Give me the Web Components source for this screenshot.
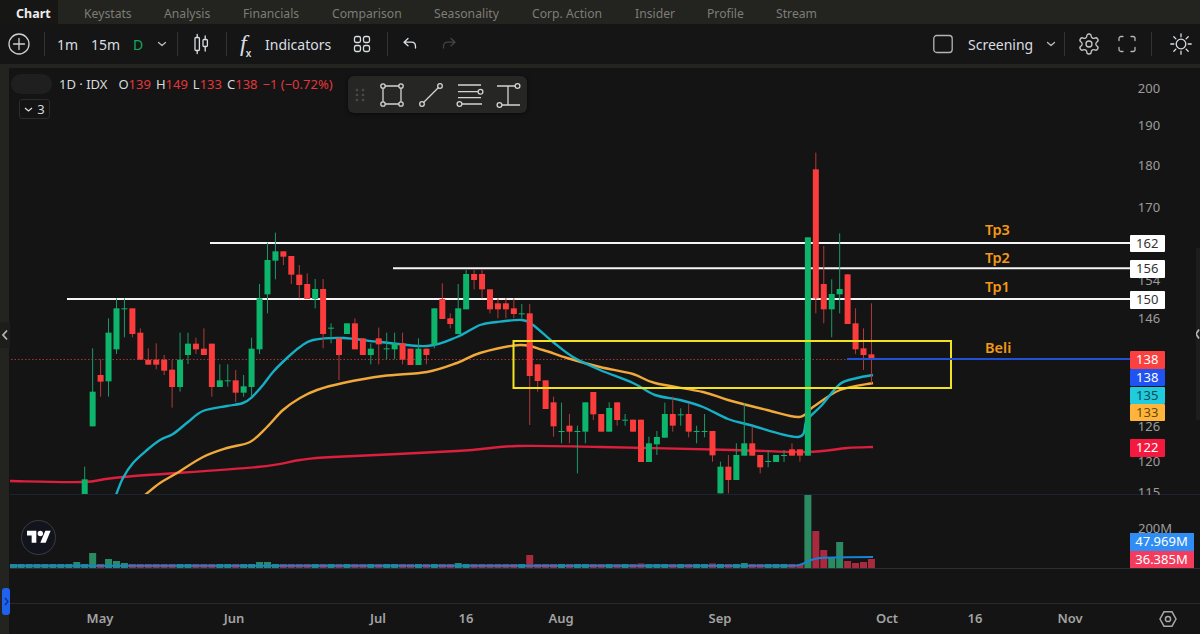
<!DOCTYPE html>
<html><head><meta charset="utf-8"><title>Chart</title>
<style>html,body{margin:0;padding:0;background:#141414;overflow:hidden}body{font-family:"Noto Sans",sans-serif}</style>
</head><body>
<tv-app></tv-app>
<template id="toolbar-tpl">
<style>
:host{display:flex;align-items:center;height:40px;box-sizing:border-box;padding:0 7px;background:#151515;color:#d9dee2;font:14px "Noto Sans",sans-serif}
svg{display:block;flex:none;fill:none;stroke:currentColor;stroke-width:1.300;stroke-linecap:round;stroke-linejoin:round}
.s{flex:none;width:1px;height:24px;background:#333331}
.t{flex:none;white-space:nowrap}
.fx{flex:none;width:26px;font:italic 24px "Liberation Serif",serif;line-height:28px;color:#d9dee2}
.fx sub{font:700 10px "Liberation Sans",sans-serif;margin-left:-1px}
.g{margin-left:auto}
.d{color:#11a95b}
.c{color:#bbb}
</style>
<svg style="color:#cfcfcf" width="24" height="24" viewBox="0 0 24 24"><circle cx="12" cy="12" r="10"/><path d="M12 6.500v11M6.500 12h11"/></svg>
<i class="s" style="margin-left:13px"></i>
<span class="t" style="margin-left:12px;width:22px">1m</span>
<span class="t" style="margin-left:12px;width:30px">15m</span>
<span class="t d" style="margin-left:12px;width:10px">D</span>
<svg class="c" style="margin-left:13px" width="12" height="12" viewBox="0 0 12 12"><path d="M2.500 4.500 6 7.500l3.500-3"/></svg>
<i class="s" style="margin-left:9px"></i>
<svg style="margin-left:15px" width="16" height="24" viewBox="0 0 16 24"><rect x="2" y="5.500" width="4.400" height="13" rx="1"/><path d="M4.200 2.500v3M4.200 18.500v3"/><rect x="10" y="7.500" width="4.400" height="7" rx="1"/><path d="M12.200 4v3.500M12.200 14.500V19"/></svg>
<i class="s" style="margin-left:17px"></i>
<span class="fx" style="margin-left:13px">f<sub>x</sub></span>
<span class="t" style="width:67px;margin-left:-1px">Indicators</span>
<svg style="margin-left:21px" width="18" height="18" viewBox="0 0 18 18"><rect x="1.500" y="1.500" width="6" height="6" rx="1.800"/><rect x="10.500" y="1.500" width="6" height="6" rx="1.800"/><rect x="1.500" y="10.500" width="6" height="6" rx="1.800"/><rect x="10.500" y="10.500" width="6" height="6" rx="1.800"/></svg>
<i class="s" style="margin-left:16px"></i>
<svg style="margin-left:13px" width="18" height="18" viewBox="0 0 18 18"><path d="M7 3.500 3 7.200l4 3.500M3 7.200h7.500c2.500 0 4 1.700 4 4.300V13"/></svg>
<svg style="margin-left:21px;color:#444" width="18" height="18" viewBox="0 0 18 18"><path d="M11 3.500l4 3.700-4 3.500M15 7.200H7.500c-2.500 0-4 1.700-4 4.300V13"/></svg>
<svg class="g" width="20" height="20" viewBox="0 0 20 20" style="color:#b5b5b5"><rect x="0.800" y="1.500" width="18.400" height="17" rx="3"/></svg>
<span class="t" style="margin-left:15px;width:67px">Screening</span>
<svg class="c" style="margin-left:10px" width="12" height="12" viewBox="0 0 12 12"><path d="M2.500 4.500 6 7.500l3.500-3"/></svg>
<i class="s" style="margin-left:7px"></i>
<svg style="margin-left:12px;color:#c8c8c8" width="24" height="24" viewBox="0 0 24 24"><path d="M12.220 2h-.44a2 2 0 0 0-2 2v.18a2 2 0 0 1-1 1.730l-.43.25a2 2 0 0 1-2 0l-.15-.08a2 2 0 0 0-2.730.73l-.22.38a2 2 0 0 0 .73 2.730l.15.1a2 2 0 0 1 1 1.720v.51a2 2 0 0 1-1 1.740l-.15.09a2 2 0 0 0-.73 2.730l.22.38a2 2 0 0 0 2.730.73l.15-.08a2 2 0 0 1 2 0l.43.25a2 2 0 0 1 1 1.730V20a2 2 0 0 0 2 2h.44a2 2 0 0 0 2-2v-.18a2 2 0 0 1 1-1.730l.43-.25a2 2 0 0 1 2 0l.15.08a2 2 0 0 0 2.730-.73l.22-.39a2 2 0 0 0-.73-2.730l-.15-.08a2 2 0 0 1-1-1.740v-.5a2 2 0 0 1 1-1.740l.15-.09a2 2 0 0 0 .73-2.730l-.22-.38a2 2 0 0 0-2.730-.73l-.15.08a2 2 0 0 1-2 0l-.43-.25a2 2 0 0 1-1-1.730V4a2 2 0 0 0-2-2z"/><circle cx="12" cy="12" r="3"/></svg>
<svg style="margin-left:16px;color:#b5b5b5" width="20" height="20" viewBox="0 0 20 20"><path d="M2 6.500V4.500a2 2 0 0 1 2-2h2M14 2.500h2a2 2 0 0 1 2 2v2M18 13.500v2a2 2 0 0 1-2 2h-2M6 17.500H4a2 2 0 0 1-2-2v-2"/></svg>
<i class="s" style="margin-left:14px"></i>
<svg style="margin-left:17px" width="24" height="24" viewBox="0 0 24 24"><circle cx="12" cy="12" r="4.800"/><path d="M12 1.800v3M12 19.200v3M1.800 12h3M19.200 12h3M4.800 4.800l2.100 2.100M17.100 17.100l2.100 2.100M4.800 19.200l2.100-2.100M17.100 6.900l2.100-2.100"/></svg>
</template>
<template id="draw-tpl">
<style>
:host{position:absolute;left:338px;top:8px;width:179px;height:37px;box-sizing:border-box;display:flex;align-items:center;padding-left:6px;background:#262624;border-radius:6px;box-shadow:0 1px 4px #0008;color:#d4d4d4}
svg{display:block;flex:none;fill:none;stroke:currentColor;stroke-width:1.300}
svg circle{fill:#262624}
.gr{stroke:none;width:12px;height:14px}
.gr circle{fill:#4a4a48}
</style>
<svg class="gr" viewBox="0 0 12 14"><circle cx="3" cy="2" r="1.300"/><circle cx="9" cy="2" r="1.300"/><circle cx="3" cy="7" r="1.300"/><circle cx="9" cy="7" r="1.300"/><circle cx="3" cy="12" r="1.300"/><circle cx="9" cy="12" r="1.300"/></svg>
<svg style="margin-left:12px" width="28" height="28" viewBox="-14 -14 28 28"><path d="M-9-9H9V9H-9Z"/><circle cx="-9" cy="-9" r="2.200"/><circle cx="9" cy="-9" r="2.200"/><circle cx="-9" cy="9" r="2.200"/><circle cx="9" cy="9" r="2.200"/></svg>
<svg style="margin-left:11px" width="28" height="28" viewBox="-14 -14 28 28"><path d="M-9 9 9-9"/><circle cx="-9" cy="9" r="2.300"/><circle cx="9" cy="-9" r="2.300"/></svg>
<svg style="margin-left:11px" width="28" height="28" viewBox="-14 -14 28 28"><path d="M-12-10H11M-12-3.300H8M-12 2.700H11M-8 9H12"/><circle cx="10.500" cy="-3.300" r="2.400"/><circle cx="-10.500" cy="9" r="2.400"/></svg>
<svg style="margin-left:10px" width="28" height="28" viewBox="-14 -14 28 28"><path d="M-11-9H8M0-9V10M-6 10H12"/><circle cx="9.500" cy="-9" r="2.400"/><circle cx="-8.500" cy="10" r="2.400"/></svg>
</template>
<script>
class TvBase extends HTMLElement{
  constructor(){super();this.attachShadow({mode:'open'});this.shadowRoot.innerHTML=this.markup()}
  markup(){return '<slot></slot>'}
}
class TvTabs extends TvBase{
  markup(){return `<style>:host{display:flex;height:24px;background:#23231f;font:12.200px "Noto Sans",sans-serif;color:#7d7d78;line-height:27px;overflow:hidden}
  b{display:block;width:58px;background:#161614;color:#ececec;font-weight:700;font-size:12.500px;padding-left:16px;box-sizing:border-box;flex:none;margin-right:26px}
  span{display:block;flex:none;white-space:nowrap}</style>
  <b>Chart</b><span style="width:80px">Keystats</span><span style="width:79px">Analysis</span><span style="width:89px">Financials</span><span style="width:102px">Comparison</span><span style="width:98px">Seasonality</span><span style="width:103px">Corp. Action</span><span style="width:72px">Insider</span><span style="width:69px">Profile</span><span>Stream</span>`}
}
class TvToolbar extends HTMLElement{constructor(){super();this.attachShadow({mode:'open'}).appendChild(document.getElementById('toolbar-tpl').content.cloneNode(true))}}
class TvDrawBar extends HTMLElement{constructor(){super();this.attachShadow({mode:'open'}).appendChild(document.getElementById('draw-tpl').content.cloneNode(true))}}
class AxisLabel extends TvBase{
  markup(){return `<style>:host{position:absolute;left:1120.500px;width:37px;height:18px;margin-top:-9px;text-align:center;color:#9c9c9c;font:13px/18px "Noto Sans",sans-serif}</style><slot></slot>`}
  connectedCallback(){this.style.top=(+this.getAttribute('y')-68)+'px'}
}
class PriceTag extends TvBase{
  markup(){return `<style>:host{position:absolute;left:1119.500px;width:35.500px;height:17.500px;text-align:center;font:13px/17px "Noto Sans",sans-serif;border-radius:1px}</style><slot></slot>`}
  connectedCallback(){this.style.top=(+this.getAttribute('y')-68)+'px';this.style.background=this.getAttribute('bg');this.style.color=this.getAttribute('fg')||'#fff'}
}
class ChartNote extends TvBase{
  markup(){return `<style>:host{position:absolute;left:975px;color:#f39a16;font:600 14.500px/18px "Noto Sans",sans-serif;height:18px}</style><slot></slot>`}
  connectedCallback(){this.style.top=(+this.getAttribute('y')-77)+'px'}
}
class TvLegend extends TvBase{
  markup(){return `<style>:host{position:absolute;left:1px;top:6px;display:block;font:13px/20px "Noto Sans",sans-serif;color:#d8dadc}
  .r{display:flex;align-items:center;white-space:nowrap}
  .blob{width:41px;height:20px;border-radius:10px;background:#1f1f1f;margin-right:7px}
  em{font-style:normal;color:#e2373d;margin-right:5px}
  .v{margin:5px 0 0 8px;width:31px;height:20px;box-sizing:border-box;border:1px solid #2b2b2b;border-radius:3px;display:flex;align-items:center;justify-content:center;gap:4px;font-size:13px;line-height:18px}
  svg{fill:none;stroke:#d8dadc;stroke-width:1.300}</style>
  <div class="r"><i class="blob"></i><span style="margin-right:11px">1D · IDX</span><span>O</span><em>139</em><span>H</span><em>149</em><span>L</span><em>133</em><span>C</span><em>138</em><em style="margin:0">−1 (−0.72%)</em></div>
  <div class="v"><svg width="9" height="9" viewBox="0 0 9 9"><path d="M1 3l3.500 3L8 3"/></svg>3</div>`}
}
const G=1,R=0;
/* type, bodyTop, bodyBottom, wickTop, wickBottom; units are 3x px from y=230 */
const CANDLES=[[G,748,795,710,795],[G,485,589,355,589],[R,435,455,388,500],[G,308,454,265,500],[G,235,358,205,372],[G,235,238,205,322],[R,235,312,235,322],[R,308,389,295,389],[R,389,404,355,404],[R,389,404,340,418],[R,389,422,375,435],[R,419,471,389,533],[G,389,471,308,485],[G,341,375,308,402],[R,341,358,323,372],[R,356,375,295,375],[R,341,471,341,500],[G,451,471,403,471],[G,451,454,403,470],[R,451,488,420,516],[G,469,488,435,500],[G,356,471,323,500],[G,205,358,162,372],[G,90,193,38,250],[G,64,92,8,148],[R,64,80,64,105],[R,78,134,78,162],[R,134,165,105,205],[R,162,207,130,207],[G,177,207,147,235],[R,177,312,147,355],[G,293,296,280,340],[R,325,375,325,450],[G,280,312,280,312],[R,280,358,265,358],[R,325,375,325,375],[G,356,375,340,403],[R,325,343,293,403],[G,355,358,308,388],[G,340,358,308,388],[R,340,389,308,403],[R,356,405,356,405],[G,356,405,325,405],[R,356,375,356,403],[G,235,343,235,355],[R,207,267,160,267],[R,265,282,250,295],[G,235,312,162,312],[G,132,238,120,238],[R,132,150,120,178],[R,132,178,120,205],[R,178,238,178,250],[R,220,238,205,265],[R,220,238,205,265],[R,235,252,205,265],[G,250,253,222,265],[R,250,438,222,585],[R,403,453,403,485],[R,451,537,451,537],[R,517,589,500,620],[G,603,606,518,640],[R,587,605,552,640],[G,603,606,587,730],[G,517,605,517,640],[R,486,553,486,570],[R,552,605,552,605],[G,534,605,517,605],[R,517,570,517,587],[G,569,572,552,587],[R,569,605,569,605],[R,569,696,569,696],[G,640,696,620,696],[G,621,643,603,675],[G,552,623,518,623],[R,552,587,500,605],[G,553,556,535,587],[R,552,605,520,622],[G,603,606,587,640],[G,603,606,552,622],[R,603,676,603,695],[G,710,790,695,790],[R,710,750,675,790],[G,675,750,640,750],[G,640,677,520,677],[R,640,677,590,677],[R,675,712,675,730],[G,693,696,660,712],[G,675,696,675,696],[G,675,678,660,696],[R,658,677,640,677],[R,658,677,658,695],[G,22,677,22,677],[R,-182,205,-232,250],[R,162,238,48,280],[G,192,238,148,322],[G,177,193,10,250],[R,133,282,133,282],[R,280,358,235,372],[R,355,375,295,420],[R,373,390,220,460]];
const XAT=i=>84.700+i*7.947;
const smooth=p=>{let d=`M${p[0][0]} ${p[0][1]}`;for(let i=0;i<p.length-1;i++){const a=p[Math.max(i-1,0)],b=p[i],c=p[i+1],e=p[Math.min(i+2,p.length-1)];d+=`C${b[0]+(c[0]-a[0])/6} ${b[1]+(c[1]-a[1])/6} ${c[0]-(e[0]-b[0])/6} ${c[1]-(e[1]-b[1])/6} ${c[0]} ${c[1]}`}return d};
const TEAL=[[116,495],[123,478],[133,463],[147,450],[160,440],[173,434],[188,422],[203,411],[227,406],[243,403],[252,397],[263,385],[273,372],[287,358],[300,347],[313,340],[343,338],[380,342],[427,346],[457,337],[480,325],[497,322],[522,320],[533,325],[553,342],[573,357],[600,370],[633,383],[655,395],[680,400],[703,407],[728,419],[750,425],[798,437],[807,420],[822,405],[840,384],[857,378],[873,375]];
const ORANGE=[[145,495],[160,483],[177,473],[203,457],[227,448],[250,442],[267,427],[283,410],[300,398],[317,390],[343,383],[383,376],[427,372],[457,363],[480,353],[520,345],[543,350],[567,358],[600,367],[633,374],[655,383],[703,392],[728,400],[767,410],[799,417],[813,407],[840,390],[873,383]];
const CRIM=[[10,481],[83,482],[123,477],[257,467],[300,460],[333,457],[457,451],[517,446],[600,447],[733,450],[807,452],[847,448],[873,447]];
class PricePane extends TvBase{
  markup(){
    let c='';
    CANDLES.forEach((d,i)=>{const x=XAT(i),col=d[0]?'#0db56c':'#fb3c3c',wc=d[0]?'#1b9a68':'#b23a3a';
      const y=v=>230+v/3;
      c+=`<path d="M${x} ${y(d[3])}V${Math.min(y(d[4]),494)}" stroke="${wc}" stroke-width="1"/>`;
      const top=y(d[1]),bot=Math.min(y(d[2]),494);
      c+=`<rect x="${x-3}" y="${top}" width="6" height="${Math.max(bot-top,1)}" fill="${col}"/>`});
    const line=(x,y)=>`<path d="M${x} ${y}H1130" stroke="#f5f5f5" stroke-width="2"/>`;
    return `<style>:host{display:block;position:relative;height:427px;background:#141414;overflow:hidden}
    svg{display:block;position:absolute;left:0;top:0}</style>
    <svg width="1190" height="427" viewBox="10 68 1190 427" fill="none">
      <path d="M11 359.500H1130" stroke="#a83232" stroke-width="1" stroke-dasharray="1.500 2"/>
      ${line(210,243)}${line(393,268.300)}${line(67,299)}
      <path d="${smooth(CRIM)}" stroke="#dd1f3e" stroke-width="2.400"/>
      <path d="${smooth(ORANGE)}" stroke="#f0a93a" stroke-width="2.400"/>
      <path d="${smooth(TEAL)}" stroke="#16b0c6" stroke-width="2.400"/>
      ${c}
      <rect x="513.500" y="341" width="437.500" height="47" stroke="#f2e21f" stroke-width="2"/>
      <path d="M847 359H1130" stroke="#2350d8" stroke-width="2"/>
      <path d="M10 494.500H1200" stroke="#1d2330" stroke-width="1"/>
    </svg><slot></slot>`}
}
class VolumePane extends TvBase{
  markup(){
    const tall={'-1':562,1:553,3:559,4:561,5:563,22:562,23:562,24:564,47:563,56:555,'91':495,92:531,93:550,94:558,95:542,96:561,97:563,98:562,99:559,79:563.500,83:563,90:564,70:563.500};
    let b='';
    for(let i=-9;i<100;i++){const x=XAT(i);
      const col=i>=0?(CANDLES[i][0]?'#2b8a61':'#a82a3f'):'#2b8a61';
      const t=tall[i]||564;
      const e=Math.min(568,568);
      b+=`<rect x="${Math.max(x-3.500,10)}" y="${t}" width="7" height="${e-t}" fill="${col}"/>`}
    return `<style>:host{display:block;position:relative;height:108px;background:#141414;overflow:hidden}
    svg{display:block;position:absolute;left:0;top:0}
    .r{position:absolute;left:1128px;top:24px;color:#9c9c9c;font:13px/18px "Noto Sans",sans-serif}
    .tg{position:absolute;left:1119.500px;width:64px;height:17.500px;text-align:center;color:#fff;font:13px/17px "Noto Sans",sans-serif}</style>
    <svg width="1190" height="108" viewBox="10 495 1190 108" fill="none">
      <path d="M10 568.500H1200" stroke="#2b2e33"/>
      ${b}
      <path d="M10 565.800H795C803 565.800 808 559 820 558S850 557 873 557" stroke="#1782d8" stroke-width="2"/>
    </svg>
    <span class="r">200M</span>
    <span class="tg" style="top:38px;background:#2f8df4">47.969M</span>
    <span class="tg" style="top:55.500px;background:#f33c5d">36.385M</span>
    <tv-mark></tv-mark>`}
}
class TvMark extends TvBase{
  markup(){return `<style>:host{position:absolute;left:11px;top:25px;width:35px;height:35px;box-sizing:border-box;border-radius:50%;border:1.500px solid #3c3c40;background:#11141c;display:flex;align-items:center;justify-content:center}
  svg{display:block}</style><svg width="24" height="19" viewBox="0 0 36 28" fill="#fff"><path d="M14 22H7V11H0V4h14v18zM28 22h-8l7.500-18h8L28 22z"/><circle cx="20" cy="8" r="4"/></svg>`}
}
class TimeAxis extends TvBase{
  markup(){const pts=[['May',100],['Jun',234],['Jul',378],['16',466],['Aug',561],['Sep',720],['Oct',887],['16',975],['Nov',1070]];
    return `<style>:host{display:block;position:relative;height:31px;box-sizing:border-box;border-top:1px solid #2a2a2a;background:#141414;color:#a3a3a3;font:600 13px/28px "Noto Sans",sans-serif}
    span{position:absolute;top:0;transform:translateX(-50%)}
    svg{position:absolute;left:1148px;top:5px;fill:none;stroke:#a8a8a8;stroke-width:1.500}</style>
    ${pts.map(p=>`<span style="left:${p[1]-10}px">${p[0]}</span>`).join('')}
    <svg width="20" height="20" viewBox="0 0 20 20"><path d="M6 2.800h8l4 7.200-4 7.200H6L2 10z"/><circle cx="10" cy="10" r="2.600"/></svg>`}
}
class TvApp extends TvBase{
  markup(){return `<style>:host{display:flex;flex-direction:column;width:1200px;height:634px;overflow:hidden;position:relative;background:#141414}
  .gap{height:4px;background:#23231f;flex:none}
  .work{display:flex;flex:1;min-height:0}
  .rail{flex:none;width:10px;background:#141414;display:flex;flex-direction:column;align-items:flex-start}
  .strip{width:9px;flex:1;background:#23231f;position:relative}
  .col{flex:1;min-width:0;display:flex;flex-direction:column}
  .ch{position:absolute;left:0;top:254px;width:10px;height:26px;background:#1d1d1b;display:flex;align-items:center;justify-content:center}
  .ch svg,.rt svg,.pill svg{fill:none;stroke:#b5b5b5;stroke-width:1.800}
  .rt{position:absolute;right:0;top:248px;width:4px;height:172px;background:#1d1d1d;overflow:hidden}
  .rt svg{position:absolute;left:0;top:80px}
  .pill{position:absolute;left:2px;top:588px;width:8px;height:27px;border-radius:3px;background:#1f62ee;display:flex;align-items:center;justify-content:center}
  .pill svg{stroke:#0b2f85;stroke-width:1.300}
  </style>
  <tv-tabs></tv-tabs><tv-toolbar></tv-toolbar><div class="gap"></div>
  <div class="work"><div class="rail"><div class="strip"><div class="ch"><svg width="8" height="12" viewBox="0 0 8 12"><path d="M6 1.500 2 6l4 4.500"/></svg></div></div></div>
  <div class="col">
    <price-pane>
      <axis-label y="88">200</axis-label><axis-label y="125">190</axis-label><axis-label y="165">180</axis-label><axis-label y="207">170</axis-label><axis-label y="280">154</axis-label><axis-label y="318">146</axis-label><axis-label y="426">126</axis-label><axis-label y="461">120</axis-label><axis-label y="492">115</axis-label>
      <chart-note y="229">Tp3</chart-note><chart-note y="257">Tp2</chart-note><chart-note y="286">Tp1</chart-note><chart-note y="347">Beli</chart-note>
      <price-tag y="234.500" bg="#fff" fg="#333">162</price-tag><price-tag y="260" bg="#fff" fg="#333">156</price-tag><price-tag y="291" bg="#fff" fg="#333">150</price-tag>
      <price-tag y="351" bg="#fb4040">138</price-tag><price-tag y="368.500" bg="#2053f2">138</price-tag><price-tag y="386.500" bg="#1fcbdd" fg="#124a52">135</price-tag><price-tag y="403.500" bg="#ffb53c" fg="#6a4708">133</price-tag><price-tag y="439" bg="#f6193f">122</price-tag>
      <tv-legend></tv-legend><tv-draw-bar></tv-draw-bar>
    </price-pane>
    <volume-pane></volume-pane>
    <time-axis></time-axis>
  </div></div>
  <div class="rt"><svg width="8" height="12" viewBox="0 0 8 12"><path d="M3 1.500 0 6l3 4.500"/></svg></div>
  <div class="pill"><svg width="5" height="9" viewBox="0 0 5 9"><path d="M1 1l3 3.500L1 8"/></svg></div>`}
}
customElements.define('tv-tabs',TvTabs);customElements.define('tv-toolbar',TvToolbar);customElements.define('tv-draw-bar',TvDrawBar);
customElements.define('axis-label',AxisLabel);customElements.define('price-tag',PriceTag);customElements.define('chart-note',ChartNote);
customElements.define('tv-legend',TvLegend);customElements.define('price-pane',PricePane);customElements.define('volume-pane',VolumePane);
customElements.define('tv-mark',TvMark);customElements.define('time-axis',TimeAxis);customElements.define('tv-app',TvApp);
</script>
</body></html>
